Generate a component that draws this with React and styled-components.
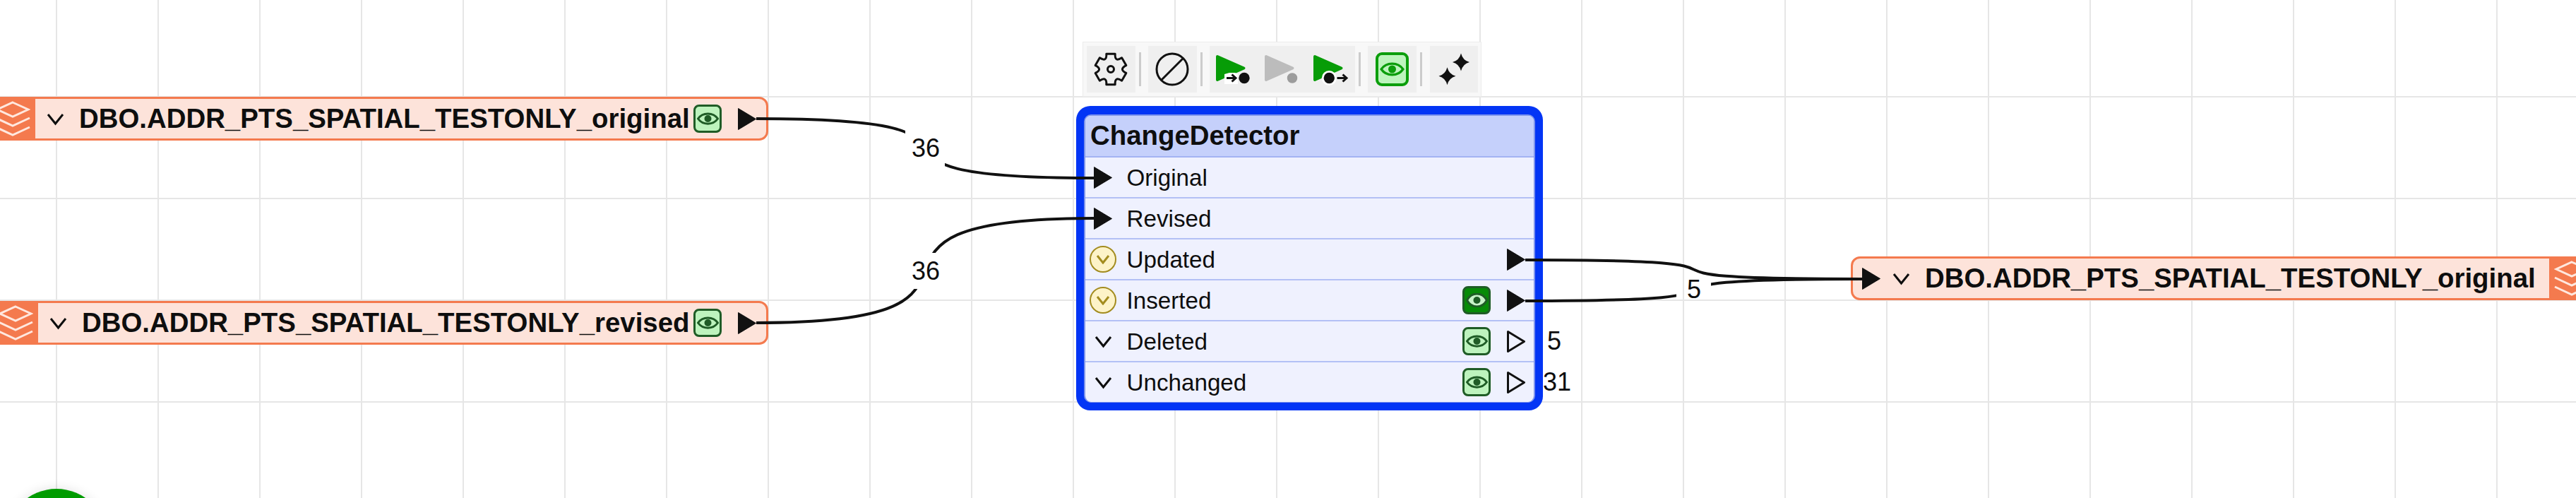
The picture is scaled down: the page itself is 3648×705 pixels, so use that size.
import styled, { createGlobalStyle } from "styled-components";

const INK = "#0e0e0e";
const ORANGE = "#f47a4e";
const FORM_GREEN = "#1f5c26";

const GlobalStyle = createGlobalStyle`
  html, body {
    margin: 0;
    padding: 0;
    background: #fff;
  }
  body {
    font-family: "Liberation Sans", Arial, sans-serif;
    color: ${INK};
  }
`;

const gearPath = () => {
  const polar = (r, deg) => {
    const a = (deg * Math.PI) / 180;
    return `${(r * Math.cos(a)).toFixed(2)} ${(r * Math.sin(a)).toFixed(2)}`;
  };
  let d = `M${polar(22.5, -90 - 16)}`;
  for (let i = 0; i < 6; i++) {
    const a = -90 + i * 60;
    d += `L${polar(22.5, a + 16)}Q${polar(11, a + 30)} ${polar(22.5, a + 44)}`;
  }
  return `${d}Z`;
};

const Canvas = styled.div`
  position: relative;
  width: 3648px;
  height: 705px;
  overflow: hidden;
  background-color: #fff;
  background-image: linear-gradient(to right, #e6e6e6 2px, transparent 2px),
    linear-gradient(to bottom, #e6e6e6 2px, transparent 2px);
  background-size: 144px 144px;
  background-position: 79px 136px;
`;

const Bookmark = styled.div`
  position: absolute;
  left: ${(p) => p.$x}px;
  top: ${(p) => p.$y}px;
  width: ${(p) => p.$width}px;
  height: 62px;
  box-sizing: border-box;
  display: flex;
  align-items: center;
  background: #fde3da;
  border: 3px solid ${ORANGE};
  border-radius: 13px;
`;

const LayerBlock = styled.div`
  flex: none;
  width: 65px;
  align-self: stretch;
  margin: -3px 0;
  display: flex;
  align-items: center;
  justify-content: center;
  background: ${ORANGE};
`;

const Chevron = styled.svg`
  flex: none;
  width: 25px;
  height: 19px;
  margin-left: ${(p) => p.$gap || 0}px;
  fill: none;
  stroke: ${INK};
  stroke-width: 3;
`;

const FeatureName = styled.span`
  flex: none;
  margin-left: 21px;
  margin-right: ${(p) => p.$after || 0}px;
  font-size: 38.4px;
  font-weight: 700;
  white-space: nowrap;
`;

const PortIcon = styled.svg`
  flex: none;
  width: 26px;
  height: 31px;
  fill: ${(p) => (p.$hollow ? "none" : "#111")};
  stroke: #111;
  stroke-width: ${(p) => (p.$hollow ? 3 : 1)};
  stroke-linejoin: round;
`;

const PortEnd = styled.div`
  margin-left: auto;
  display: flex;
  align-items: center;
  gap: 23px;
  padding-right: 14px;
`;

const PortStart = styled.div`
  flex: none;
  margin-left: 13px;
  display: flex;
`;

const EyeBox = styled.div`
  flex: none;
  box-sizing: border-box;
  width: 40px;
  height: 40px;
  display: flex;
  align-items: center;
  justify-content: center;
  border: 3px solid ${FORM_GREEN};
  border-radius: 8px;
  background: ${(p) => (p.$on ? "#078b07" : "#bdf3bd")};
`;

const EyeGlyph = styled.svg`
  flex: none;
  width: ${(p) => p.$w}px;
  height: ${(p) => p.$h}px;
  fill: ${(p) => p.$fill || "none"};
  stroke: ${(p) => p.$color};
  stroke-width: 3;
`;

const Transformer = styled.div`
  position: absolute;
  left: 1524px;
  top: 150px;
  width: 661px;
  height: 431px;
  box-sizing: border-box;
  border-style: solid;
  border-color: #0335f5;
  border-width: 12px 11px 11px;
  border-radius: 20px;
  background: #0335f5;
`;

const TransformerBody = styled.div`
  height: 100%;
  box-sizing: border-box;
  display: flex;
  flex-direction: column;
  border: 2px solid #7f95ec;
  border-bottom-width: 1px;
  border-radius: 10px;
  background: #eff1fe;
`;

const TransformerTitle = styled.div`
  flex: none;
  height: 59px;
  box-sizing: border-box;
  display: flex;
  align-items: center;
  padding: 0 0 1px 7px;
  background: #c5d0fb;
  border-bottom: 2px solid #a3b3f3;
  border-radius: 8px 8px 0 0;
  font-size: 38.4px;
  font-weight: 700;
`;

const PortRow = styled.div`
  flex: 1;
  position: relative;
  display: flex;
  align-items: center;
  padding: 0 12px 0 1px;
  font-size: 33.2px;
  & + & {
    border-top: 2px solid #b3c0f5;
  }
`;

const PortSlot = styled.div`
  flex: none;
  width: 48px;
  margin-right: 9.5px;
  display: flex;
  align-items: center;
  justify-content: center;
`;

const PortName = styled.span`
  padding-top: 2px;
`;

const PortActions = styled.div`
  margin-left: auto;
  display: flex;
  align-items: center;
  gap: 23px;
`;

const Fanout = styled.div`
  flex: none;
  width: 38px;
  height: 38px;
  box-sizing: border-box;
  display: flex;
  align-items: center;
  justify-content: center;
  border: 2px solid #a38c1f;
  border-radius: 50%;
  background: #fdf3c8;
`;

const OutputCount = styled.span`
  position: absolute;
  left: ${(p) => p.$x}px;
  top: 50%;
  transform: translateY(-50%);
  font-size: 36px;
`;

const Toolbar = styled.div`
  position: absolute;
  left: 1533px;
  top: 59px;
  width: 565px;
  height: 78px;
  box-sizing: border-box;
  display: flex;
  align-items: center;
  padding-left: 5px;
  background: #f8f8f8;
  border: 1px solid #ececec;
`;

const ToolButton = styled.div`
  flex: none;
  width: 68.6px;
  height: 66px;
  display: flex;
  align-items: center;
  justify-content: center;
  background: #efefef;
`;

const ToolDivider = styled.div`
  flex: none;
  width: 3px;
  height: 48px;
  margin: 0 10.5px 0 5px;
  background: #cccccc;
`;

const ViewToggle = styled.div`
  width: 47px;
  height: 48px;
  box-sizing: border-box;
  display: flex;
  align-items: center;
  justify-content: center;
  background: #bdf4bd;
  border: 4px solid #0b9e0b;
  border-radius: 9px;
`;

const WireLayer = styled.svg`
  position: absolute;
  inset: 0;
  width: 3648px;
  height: 705px;
  fill: none;
  stroke: #111;
  stroke-width: 4;
  pointer-events: none;
`;

const WireLabel = styled.span`
  position: absolute;
  left: ${(p) => p.$x}px;
  top: ${(p) => p.$y}px;
  transform: translate(-50%, -50%);
  font-size: 36px;
`;

const RunButton = styled.div`
  position: absolute;
  left: 8px;
  top: 692px;
  width: 144px;
  height: 144px;
  border-radius: 50%;
  background: #009b00;
  box-shadow: 0 0 16px rgba(0, 0, 0, 0.12);
`;

const DownChevron = ({ gap }) => (
  <Chevron viewBox="0 0 25 19" $gap={gap}>
    <path d="M2 3 L12.5 16 L23 3" />
  </Chevron>
);

const SmallChevron = () => (
  <svg width="20" height="14" viewBox="0 0 20 14" fill="none" stroke="#a38c1f" strokeWidth="3">
    <path d="M2 2 L10 12 L18 2" />
  </svg>
);

const Triangle = ({ hollow }) => (
  <PortIcon viewBox="0 0 26 31" $hollow={hollow}>
    {hollow ? <path d="M1.5 1.5 L24.5 15.5 L1.5 29.5 Z" /> : <path d="M.5 .5 L25.5 15.5 L.5 30.5 Z" />}
  </PortIcon>
);

const Eye = ({ color, w = 31, h = 20, fill, open }) => (
  <EyeGlyph viewBox="0 0 31 20" $w={w} $h={h} $color={color} $fill={fill}>
    <path
      d={
        open
          ? "M1.5 10 C8 -2 23 -2 29.5 10 C23 22 8 22 1.5 10 Z"
          : "M1.5 10 C8 0.5 23 0.5 29.5 10 C23 19.5 8 19.5 1.5 10 Z"
      }
    />
    <circle cx="15.5" cy="10" r="5" fill={color} stroke="none" />
  </EyeGlyph>
);

const LayersIcon = () => (
  <svg width="50" height="50" viewBox="0 0 50 50" fill="none" stroke="#ffe8df" strokeWidth="3">
    <path d="M25 2 L47 12 L25 22 L3 12 Z" />
    <path d="M1 24 L25 35 L49 24" />
    <path d="M1 37 L25 48 L49 37" />
  </svg>
);

const GearIcon = () => (
  <svg width="48" height="48" viewBox="-24 -24 48 48" fill="none" stroke="#111" strokeWidth="3" strokeLinejoin="round">
    <path d={gearPath()} />
    <circle r="4.5" />
  </svg>
);

const DisableIcon = () => (
  <svg width="48" height="48" viewBox="0 0 48 48" fill="none" stroke="#111" strokeWidth="3">
    <circle cx="24" cy="24" r="22" />
    <path d="M8.5 39.5 L39.5 8.5" />
  </svg>
);

const RunToIcon = ({ mode }) => {
  const color = mode === "plain" ? "#bcbcbc" : "#079c07";
  return (
    <svg width="68" height="66" viewBox="0 0 68 66">
      <path d="M11 15 L48.5 31.5 L11 48 Z" fill={color} stroke={color} strokeWidth="4" strokeLinejoin="round" />
      {mode === "to" && (
        <>
          <path d="M21 40 L28 38 H36 L40 40 V54 H21 Z" fill="#fff" />
          <circle cx="49" cy="45.5" r="7.7" fill="#111" />
          <path d="M24 45.5 H36 M31.5 40.5 L37 45.5 L31.5 50.5" fill="none" stroke="#111" strokeWidth="3" />
        </>
      )}
      {mode === "plain" && <circle cx="48" cy="45.5" r="8" fill="#9c9c9c" stroke="#efefef" strokeWidth="1.5" />}
      {mode === "from" && (
        <>
          <circle cx="31.3" cy="45.5" r="10.5" fill="#fff" />
          <circle cx="31.3" cy="45.5" r="7.7" fill="#111" />
          <path d="M42.5 45.5 H55 M50.5 40.5 L56 45.5 L50.5 50.5" fill="none" stroke="#111" strokeWidth="3" />
        </>
      )}
    </svg>
  );
};

const star = (cx, cy) =>
  `M${cx} ${cy - 12.5} Q${cx + 2.5} ${cy - 2.5} ${cx + 12} ${cy} Q${cx + 2.5} ${cy + 2.5} ${cx} ${cy + 12.5} Q${cx - 2.5} ${cy + 2.5} ${cx - 12} ${cy} Q${cx - 2.5} ${cy - 2.5} ${cx} ${cy - 12.5}Z`;

const SparkleIcon = () => (
  <svg width="68" height="66" viewBox="0 0 68 66" fill="#111">
    <path d={star(44, 23)} />
    <path d={star(24.5, 42.7)} />
  </svg>
);

const PORTS = [
  { name: "Original", slot: "in" },
  { name: "Revised", slot: "in" },
  { name: "Updated", slot: "fan", out: "connected" },
  { name: "Inserted", slot: "fan", eye: true, on: true, out: "connected" },
  { name: "Deleted", slot: "chevron", eye: true, out: "open", count: "5", countX: 654 },
  { name: "Unchanged", slot: "chevron", eye: true, out: "open", count: "31", countX: 648 },
];

// gap is the part of the wire left open for its count label
const WIRES = [
  { id: "w1", d: "M1071 168 C1491 168 1129 252 1549 252", gap: { x: 1282, y: 0, width: 56, height: 705 } },
  { id: "w2", d: "M1071 457 C1491 457 1129 309 1549 309", gap: { x: 0, y: 358, width: 3648, height: 51 } },
  { id: "w3", d: "M2160 368 C2580 368 2217 395 2637 395" },
  { id: "w4", d: "M2160 426 C2580 426 2217 395 2637 395", gap: { x: 2374, y: 0, width: 49, height: 705 } },
];

const App = () => (
  <Canvas>
    <GlobalStyle />
    <RunButton />

    <Bookmark $x={-18} $y={137} $width={1106}>
      <LayerBlock>
        <LayersIcon />
      </LayerBlock>
      <DownChevron gap={16} />
      <FeatureName>DBO.ADDR_PTS_SPATIAL_TESTONLY_original</FeatureName>
      <PortEnd>
        <EyeBox>
          <Eye color={FORM_GREEN} />
        </EyeBox>
        <Triangle />
      </PortEnd>
    </Bookmark>

    <Bookmark $x={-14} $y={426} $width={1102}>
      <LayerBlock>
        <LayersIcon />
      </LayerBlock>
      <DownChevron gap={16} />
      <FeatureName>DBO.ADDR_PTS_SPATIAL_TESTONLY_revised</FeatureName>
      <PortEnd>
        <EyeBox>
          <Eye color={FORM_GREEN} />
        </EyeBox>
        <Triangle />
      </PortEnd>
    </Bookmark>

    <Bookmark $x={2621} $y={363} $width={1056}>
      <PortStart>
        <Triangle />
      </PortStart>
      <DownChevron gap={17} />
      <FeatureName $after={19}>DBO.ADDR_PTS_SPATIAL_TESTONLY_original</FeatureName>
      <LayerBlock>
        <LayersIcon />
      </LayerBlock>
    </Bookmark>

    <Toolbar>
      <ToolButton>
        <GearIcon />
      </ToolButton>
      <ToolDivider />
      <ToolButton>
        <DisableIcon />
      </ToolButton>
      <ToolDivider />
      <ToolButton>
        <RunToIcon mode="to" />
      </ToolButton>
      <ToolButton>
        <RunToIcon mode="plain" />
      </ToolButton>
      <ToolButton>
        <RunToIcon mode="from" />
      </ToolButton>
      <ToolDivider />
      <ToolButton>
        <ViewToggle>
          <Eye color="#0b9e0b" w={35} h={22} />
        </ViewToggle>
      </ToolButton>
      <ToolDivider />
      <ToolButton>
        <SparkleIcon />
      </ToolButton>
    </Toolbar>

    <Transformer>
      <TransformerBody>
        <TransformerTitle>ChangeDetector</TransformerTitle>
        {PORTS.map((port) => (
          <PortRow key={port.name}>
            <PortSlot>
              {port.slot === "in" && <Triangle />}
              {port.slot === "fan" && (
                <Fanout>
                  <SmallChevron />
                </Fanout>
              )}
              {port.slot === "chevron" && <DownChevron />}
            </PortSlot>
            <PortName>{port.name}</PortName>
            {port.out && (
              <PortActions>
                {port.eye && (
                  <EyeBox $on={port.on}>
                    <Eye color={FORM_GREEN} open={port.on} fill={port.on ? "#c8f2c8" : undefined} />
                  </EyeBox>
                )}
                {port.out === "connected" ? <Triangle /> : <Triangle hollow />}
              </PortActions>
            )}
            {port.count && <OutputCount $x={port.countX}>{port.count}</OutputCount>}
          </PortRow>
        ))}
      </TransformerBody>
    </Transformer>

    <WireLayer viewBox="0 0 3648 705">
      <defs>
        {WIRES.filter((w) => w.gap).map((w) => (
          <mask key={w.id} id={`gap-${w.id}`} maskUnits="userSpaceOnUse" x="0" y="0" width="3648" height="705">
            <rect x="0" y="0" width="3648" height="705" fill="#fff" stroke="none" />
            <rect {...w.gap} fill="#000" stroke="none" />
          </mask>
        ))}
      </defs>
      {WIRES.map((w) => (
        <path key={w.id} d={w.d} mask={w.gap ? `url(#gap-${w.id})` : undefined} />
      ))}
    </WireLayer>

    <WireLabel $x={1311} $y={210}>36</WireLabel>
    <WireLabel $x={1311} $y={384}>36</WireLabel>
    <WireLabel $x={2399} $y={410}>5</WireLabel>
  </Canvas>
);

export default App;
